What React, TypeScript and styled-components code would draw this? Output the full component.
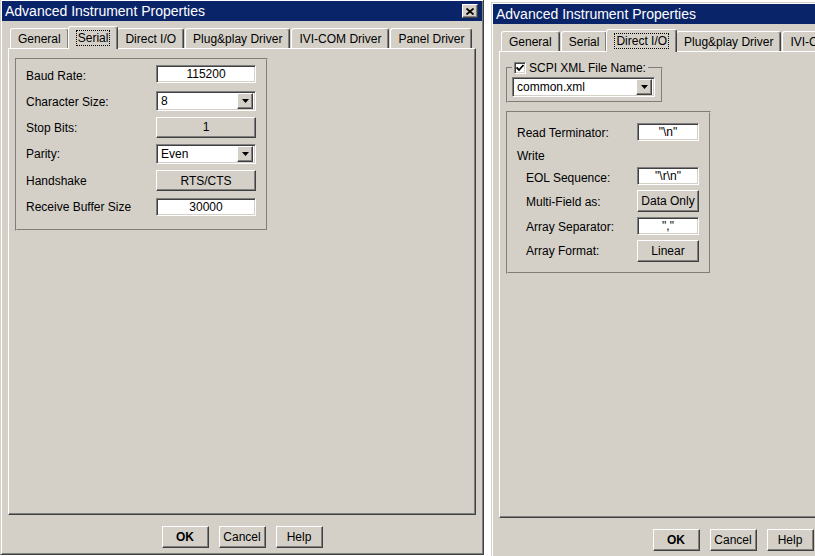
import React from 'react';
import styled, { createGlobalStyle, css } from 'styled-components';

const GlobalStyle = createGlobalStyle`
  html, body {
    margin: 0;
    padding: 0;
    background: #ffffff;
    overflow: hidden;
  }
  body {
    font-family: "Liberation Sans", Arial, sans-serif;
    font-size: 12px;
    color: #000000;
  }
`;

const sunken = css`
  box-sizing: border-box;
  background: #ffffff;
  border: 1px solid;
  border-color: #808080 #ffffff #ffffff #808080;
  box-shadow: inset 1px 1px 0 #404040, inset -1px -1px 0 #d4d0c8;
`;

const raised = css`
  box-sizing: border-box;
  background: #d4d0c8;
  border: 1px solid;
  border-color: #ffffff #404040 #404040 #ffffff;
  box-shadow: inset -1px -1px 0 #808080;
`;

const Desktop = styled.div`
  display: flex;
  align-items: flex-start;
  gap: 7px;
  width: 815px;
  height: 556px;
  overflow: hidden;
`;

const Window = styled.div<{ $top: number }>`
  flex: none;
  box-sizing: border-box;
  width: 484px;
  height: 556px;
  margin-top: ${p => p.$top}px;
  padding: 1px;
  display: flex;
  flex-direction: column;
  background: #d4d0c8;
  border: 1px solid;
  border-color: #d4d0c8 #404040 #404040 #d4d0c8;
  box-shadow: inset 1px 1px 0 #ffffff, inset -1px -1px 0 #808080;
`;

const TitleBar = styled.div`
  height: 20px;
  flex: none;
  display: flex;
  align-items: center;
  justify-content: space-between;
  padding: 0 4px 0 3px;
  background: #0a246a;
`;

const TitleText = styled.span`
  color: #ffffff;
  font-size: 14px;
  white-space: nowrap;
`;

const CloseButton = styled.div`
  ${raised};
  width: 16px;
  height: 14px;
  display: flex;
  align-items: center;
  justify-content: center;
`;

const Body = styled.div`
  flex: 1;
  display: flex;
  flex-direction: column;
  padding: 5px 6px 0;
  min-height: 0;
`;

const TabRow = styled.div`
  height: 22px;
  flex: none;
  display: flex;
  align-items: flex-end;
  gap: 1px;
  padding-left: 2px;
`;

const Tab = styled.div<{ $active?: boolean }>`
  position: relative;
  z-index: ${p => (p.$active ? 1 : 0)};
  box-sizing: border-box;
  height: ${p => (p.$active ? 23 : 20)}px;
  margin: 0 ${p => (p.$active ? -2 : 0)}px ${p => (p.$active ? -1 : 0)}px;
  padding: ${p => (p.$active ? '0 8px 1px' : '1px 7px 0')};
  display: flex;
  align-items: center;
  white-space: nowrap;
  background: #d4d0c8;
  border-top: 1px solid #ffffff;
  border-left: 1px solid #ffffff;
  border-right: 1px solid #404040;
  border-radius: 3px 3px 0 0;
  box-shadow: inset -1px 0 0 #808080;
`;

const FocusLabel = styled.span`
  outline: 1px dotted #000000;
  outline-offset: 0;
  padding: 0 1px;
`;

const Panel = styled.div`
  flex: 1;
  display: flex;
  flex-direction: column;
  align-items: flex-start;
  padding: 9px 6px;
  border: 1px solid;
  border-color: #ffffff #404040 #404040 #ffffff;
  box-shadow: inset -1px -1px 0 #808080;
`;

const GroupBox = styled.div<{ $width: number }>`
  box-sizing: border-box;
  width: ${p => p.$width}px;
  border: 2px groove #d4d0c8;
`;

const FieldGrid = styled.div<{ $cols: string; $rows: string; $pad: string }>`
  display: grid;
  grid-template-columns: ${p => p.$cols};
  grid-template-rows: ${p => p.$rows};
  align-items: center;
  padding: ${p => p.$pad};
`;

const Label = styled.span<{ $indent?: number; $drop?: number }>`
  padding-left: ${p => p.$indent ?? 0}px;
  padding-top: ${p => p.$drop ?? 0}px;
  white-space: nowrap;
`;

const TextField = styled.div<{ $width: number }>`
  ${sunken};
  width: ${p => p.$width}px;
  height: 18px;
  line-height: 16px;
  text-align: center;
`;

const Combo = styled.div<{ $width: number }>`
  ${sunken};
  width: ${p => p.$width}px;
  height: 20px;
  padding: 2px 2px 2px 4px;
  display: flex;
  align-items: center;
  justify-content: space-between;
`;

const ArrowButton = styled.div`
  ${raised};
  width: 16px;
  height: 16px;
  display: flex;
  align-items: center;
  justify-content: center;
`;

const PushButton = styled.div<{ $width: number; $height: number; $bold?: boolean }>`
  ${raised};
  width: ${p => p.$width}px;
  height: ${p => p.$height}px;
  display: flex;
  align-items: center;
  justify-content: center;
  font-weight: ${p => (p.$bold ? 700 : 400)};
  white-space: nowrap;
`;

const Footer = styled.div`
  height: 38px;
  flex: none;
  display: flex;
  justify-content: center;
  align-items: flex-start;
  gap: 10px;
  padding-top: 11px;
  box-sizing: border-box;
`;

const Fieldset = styled.fieldset`
  box-sizing: border-box;
  width: 157px;
  margin: 0;
  padding: 0 6px 4px 4px;
  border: 2px groove #d4d0c8;
  min-width: 0;
`;

const Legend = styled.legend`
  display: flex;
  align-items: center;
  gap: 3px;
  padding: 0 2px;
  height: 13px;
`;

const CheckBox = styled.span`
  ${sunken};
  width: 12px;
  height: 12px;
  display: inline-flex;
  align-items: center;
  justify-content: center;
`;

const ScpiCombo = styled(Combo)`
  margin-top: 3px;
`;

const TerminatorGroup = styled(GroupBox)`
  margin-top: 8px;
`;

const DownArrow = () => (
  <svg width="7" height="4" viewBox="0 0 7 4">
    <polygon points="0,0 7,0 3.5,4" fill="#000" />
  </svg>
);

const CloseGlyph = () => (
  <svg width="8" height="7" viewBox="0 0 8 7">
    <path d="M0.5 0.5 L7.5 6.5 M7.5 0.5 L0.5 6.5" stroke="#000" strokeWidth="1.7" />
  </svg>
);

const CheckGlyph = () => (
  <svg width="8" height="8" viewBox="0 0 8 8">
    <polyline points="0.5,3.5 3,6 7.5,1" fill="none" stroke="#000" strokeWidth="1.8" />
  </svg>
);

const tabs = ['General', 'Serial', 'Direct I/O', 'Plug&play Driver', 'IVI-COM Driver', 'Panel Driver'];

const Dialog: React.FC<{ top: number; active: string; showClose?: boolean; children: React.ReactNode }> = ({
  top,
  active,
  showClose,
  children,
}) => (
  <Window $top={top}>
    <TitleBar>
      <TitleText>Advanced Instrument Properties</TitleText>
      {showClose && (
        <CloseButton>
          <CloseGlyph />
        </CloseButton>
      )}
    </TitleBar>
    <Body>
      <TabRow>
        {tabs.map(t => (
          <Tab key={t} $active={t === active}>
            {t === active ? <FocusLabel>{t}</FocusLabel> : t}
          </Tab>
        ))}
      </TabRow>
      <Panel>{children}</Panel>
    </Body>
    <Footer>
      <PushButton $width={47} $height={22} $bold>OK</PushButton>
      <PushButton $width={47} $height={22}>Cancel</PushButton>
      <PushButton $width={47} $height={22}>Help</PushButton>
    </Footer>
  </Window>
);

const App: React.FC = () => (
  <>
    <GlobalStyle />
    <Desktop>
      <Dialog top={-1} active="Serial" showClose>
        <GroupBox $width={253}>
          <FieldGrid $cols="130px 100px" $rows="repeat(6, 26.6px)" $pad="1px 9px 8px 9px">
            <Label $drop={3}>Baud Rate:</Label>
            <TextField $width={100}>115200</TextField>
            <Label $drop={2}>Character Size:</Label>
            <Combo $width={100}>
              <span>8</span>
              <ArrowButton><DownArrow /></ArrowButton>
            </Combo>
            <Label $drop={1}>Stop Bits:</Label>
            <PushButton $width={100} $height={21}>1</PushButton>
            <Label>Parity:</Label>
            <Combo $width={100}>
              <span>Even</span>
              <ArrowButton><DownArrow /></ArrowButton>
            </Combo>
            <Label>Handshake</Label>
            <PushButton $width={100} $height={21}>RTS/CTS</PushButton>
            <Label>Receive Buffer Size</Label>
            <TextField $width={100}>30000</TextField>
          </FieldGrid>
        </GroupBox>
      </Dialog>
      <Dialog top={2} active="Direct I/O" showClose>
        <Fieldset>
          <Legend>
            <CheckBox><CheckGlyph /></CheckBox>
            <span>SCPI XML File Name:</span>
          </Legend>
          <ScpiCombo $width={143}>
            <span>common.xml</span>
            <ArrowButton><DownArrow /></ArrowButton>
          </ScpiCombo>
        </Fieldset>
        <TerminatorGroup $width={205}>
          <FieldGrid $cols="120px 62px" $rows="24px 20px 24px 25px 25px 25px" $pad="7px 10px 9px 9px">
            <Label $drop={2}>Read Terminator:</Label>
            <TextField $width={62}>{'"\\n"'}</TextField>
            <Label $drop={3}>Write</Label>
            <span />
            <Label $indent={9} $drop={4}>EOL Sequence:</Label>
            <TextField $width={62}>{'"\\r\\n"'}</TextField>
            <Label $indent={9} $drop={3}>Multi-Field as:</Label>
            <PushButton $width={62} $height={22}>Data Only</PushButton>
            <Label $indent={9} $drop={2}>Array Separator:</Label>
            <TextField $width={62}>{'","'}</TextField>
            <Label $indent={9}>Array Format:</Label>
            <PushButton $width={62} $height={22}>Linear</PushButton>
          </FieldGrid>
        </TerminatorGroup>
      </Dialog>
    </Desktop>
  </>
);

export default App;
